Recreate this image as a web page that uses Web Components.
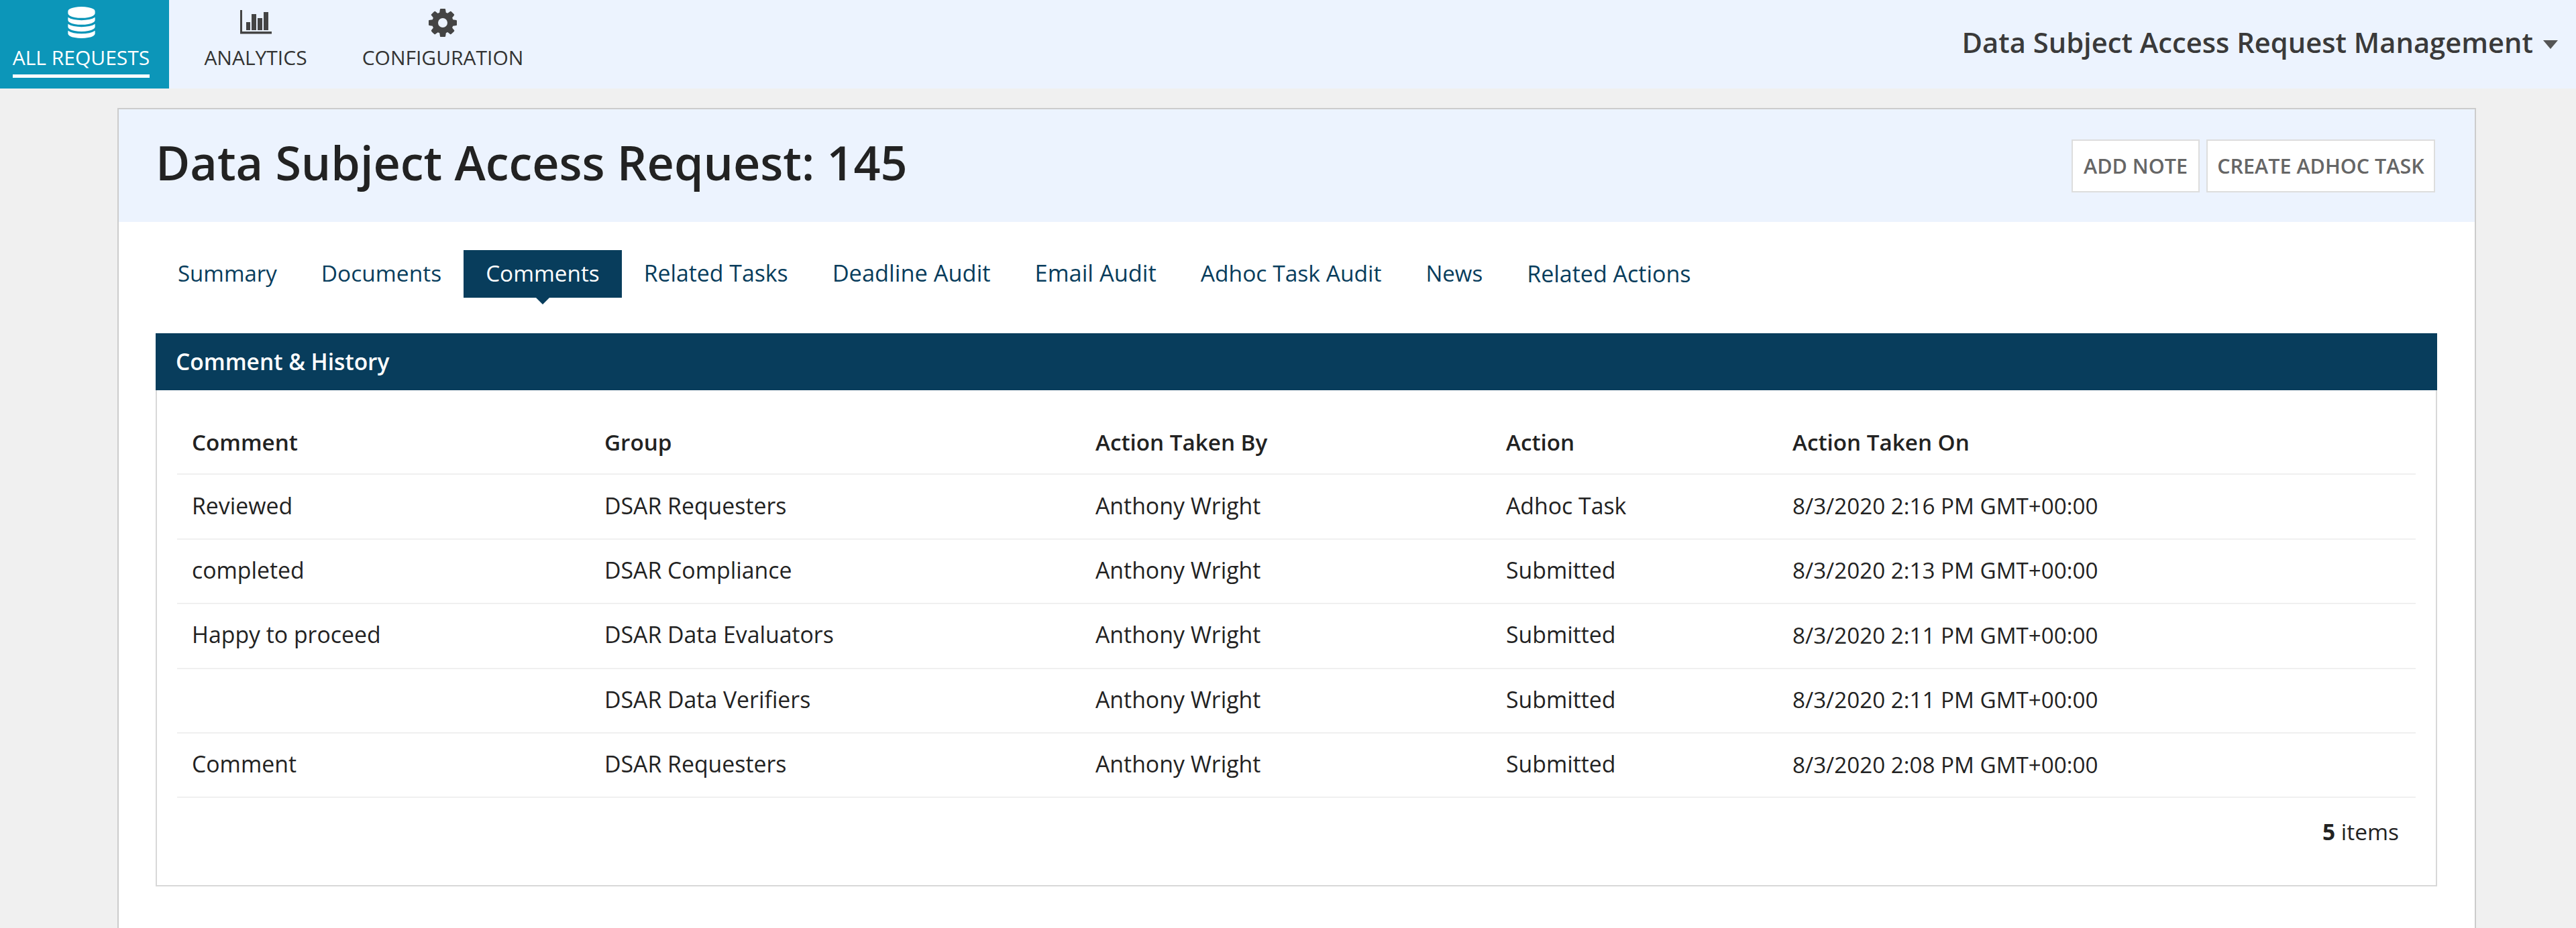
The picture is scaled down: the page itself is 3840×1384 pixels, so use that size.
<!DOCTYPE html>
<html lang="en">
<head>
<meta charset="utf-8">
<title>DSAR</title>
<style>
  html, body { margin: 0; height: 100%; }
  body { background: #f0f0f0; font-family: "Open Sans", "Liberation Sans", sans-serif; color: #222; overflow: hidden; }
</style>
</head>
<body>
<app-nav title-text="Data Subject Access Request Management">
  <nav-item active label="ALL REQUESTS" width="252">
    <svg slot="icon" width="41" height="47" viewBox="128 0 1536 1792" fill="currentColor"><path d="M896 768q237 0 443-43t325-127v170q0 69-103 128t-280 93.5-385 34.5-385-34.5-280-93.5-103-128v-170q119 84 325 127t443 43zm0 768q237 0 443-43t325-127v170q0 69-103 128t-280 93.5-385 34.5-385-34.5-280-93.5-103-128v-170q119 84 325 127t443 43zm0-384q237 0 443-43t325-127v170q0 69-103 128t-280 93.5-385 34.5-385-34.5-280-93.5-103-128v-170q119 84 325 127t443 43zm0-1152q208 0 385 34.5t280 93.5 103 128v128q0 69-103 128t-280 93.5-385 34.5-385-34.5-280-93.5-103-128v-128q0-69 103-128t280-93.5 385-34.5z"/></svg>
  </nav-item>
  <nav-item label="ANALYTICS" width="258">
    <svg slot="icon" width="47" height="37" viewBox="0 0 47 37" fill="currentColor"><path d="M0 0h3v32H47v3.5H0z"/><rect x="9" y="18" width="6" height="12"/><rect x="17" y="6" width="7" height="24"/><rect x="26" y="12" width="7" height="18"/><rect x="35" y="3" width="7" height="27"/></svg>
  </nav-item>
  <nav-item label="CONFIGURATION" width="300">
    <svg slot="icon" width="42" height="42" viewBox="128 128 1536 1536" fill="currentColor"><path d="M1152 896q0-106-75-181t-181-75-181 75-75 181 75 181 181 75 181-75 75-181zm512-109v222q0 12-8 23t-20 13l-185 28q-19 54-39 91 35 50 107 138 10 12 10 25t-9 23q-27 37-99 108t-94 71q-12 0-26-9l-138-108q-44 23-91 38-16 136-29 186-7 28-36 28h-222q-14 0-24.5-8.5t-11.5-21.5l-28-184q-49-16-90-37l-141 107q-10 9-25 9-14 0-25-11-126-114-165-168-7-10-7-23 0-12 8-23 15-21 51-66.5t54-70.5q-27-50-41-99l-183-27q-13-2-21-12.5t-8-23.5v-222q0-12 8-23t19-13l186-28q14-46 39-92-40-57-107-138-10-12-10-24 0-10 9-23 26-36 98.5-107.5t94.5-71.5q13 0 26 10l138 107q44-23 91-38 16-136 29-186 7-28 36-28h222q14 0 24.5 8.5t11.5 21.5l28 184q49 16 90 37l142-107q9-9 24-9 13 0 25 10 129 119 165 170 7 8 7 22 0 12-8 23-15 21-51 66.5t-54 70.5q26 50 41 98l183 28q13 2 21 12.5t8 23.5z"/></svg>
  </nav-item>
</app-nav>

<request-card heading="Data Subject Access Request: 145">
  <action-button slot="actions" wide="191">ADD NOTE</action-button>
  <action-button slot="actions" wide="341">CREATE ADHOC TASK</action-button>
  <tab-bar>
    <tab-item style="--fs:33px">Summary</tab-item>
    <tab-item style="--fs:33.5px">Documents</tab-item>
    <tab-item active style="--fs:33.3px">Comments</tab-item>
    <tab-item style="--fs:33.8px">Related Tasks</tab-item>
    <tab-item style="--fs:34.4px">Deadline Audit</tab-item>
    <tab-item style="--fs:34.4px">Email Audit</tab-item>
    <tab-item style="--fs:33.6px">Adhoc Task Audit</tab-item>
    <tab-item style="--fs:33px">News</tab-item>
    <tab-item style="--fs:34px">Related Actions</tab-item>
  </tab-bar>
  <history-panel heading="Comment &amp; History">
    <history-row header><span>Comment</span><span>Group</span><span>Action Taken By</span><span>Action</span><span>Action Taken On</span></history-row>
    <history-row><span>Reviewed</span><span>DSAR Requesters</span><span>Anthony Wright</span><span>Adhoc Task</span><span class="when">8/3/2020 2:16 PM GMT+00:00</span></history-row>
    <history-row><span>completed</span><span>DSAR Compliance</span><span>Anthony Wright</span><span>Submitted</span><span class="when">8/3/2020 2:13 PM GMT+00:00</span></history-row>
    <history-row><span>Happy to proceed</span><span>DSAR Data Evaluators</span><span>Anthony Wright</span><span>Submitted</span><span class="when">8/3/2020 2:11 PM GMT+00:00</span></history-row>
    <history-row><span></span><span>DSAR Data Verifiers</span><span>Anthony Wright</span><span>Submitted</span><span class="when">8/3/2020 2:11 PM GMT+00:00</span></history-row>
    <history-row><span>Comment</span><span>DSAR Requesters</span><span>Anthony Wright</span><span>Submitted</span><span class="when">8/3/2020 2:08 PM GMT+00:00</span></history-row>
    <pager-info slot="footer"><b>5</b> items</pager-info>
  </history-panel>
</request-card>

<script>
  const FONT = '"Open Sans", "Liberation Sans", sans-serif';
  function define(name, css, html, extra) {
    customElements.define(name, class extends HTMLElement {
      constructor() {
        super();
        const root = this.attachShadow({ mode: 'open' });
        root.innerHTML = '<style>' + css + '</style>' + (typeof html === 'function' ? html(this) : html);
      }
      connectedCallback() {
        const root = this.shadowRoot;
        root.querySelectorAll('[data-attr]').forEach(n => { n.textContent = this.getAttribute(n.dataset.attr) || ''; });
        if (extra) extra(this);
      }
    });
  }

  define('app-nav', `
    :host { display: flex; align-items: stretch; height: 132px; background: #ecf3fe; }
    .title { margin-left: auto; display: flex; align-items: center; gap: 15px; padding: 0 27px 6px 0; font: 600 41.7px/1 ${FONT}; color: #3a3a3a; white-space: nowrap; }
    .caret { width: 0; height: 0; border: 11px solid transparent; border-top: 13px solid #555; border-bottom: 0; margin-top: 6px; }
  `, `<slot></slot><div class="title"><span data-attr="title-text"></span><i class="caret"></i></div>`);

  define('nav-item', `
    :host { display: flex; flex-direction: column; align-items: center; box-sizing: border-box; color: #444; padding-top: 10px; }
    :host([active]) { background: #0c96b9; color: #fff; padding-right: 10px; }
    .icon { height: 47px; display: flex; align-items: center; justify-content: center; }
    .label { font: 400 30px/1 ${FONT}; white-space: nowrap; color: #333; margin-top: 14px; padding-bottom: 10px; border-bottom: 5px solid transparent; }
    :host([active]) .label { color: #fff; border-bottom-color: #fff; }
  `, `<div class="icon"><slot name="icon"></slot></div><div class="label" data-attr="label"></div>`,
  el => { el.style.width = el.getAttribute('width') + 'px'; });

  define('request-card', `
    :host { display: block; box-sizing: border-box; width: 3516px; height: 1223px; margin: 29px 0 0 175px; background: #fff; border: 2px solid #ccc; border-bottom: 0; }
    header { display: flex; align-items: center; justify-content: space-between; height: 168px; padding: 0 59px 0 55px; background: #ecf3fe; }
    h1 { margin: 0 0 10px; font: 600 70px/1 ${FONT}; color: #222; }
    .actions { display: flex; gap: 10px; }
    .body { padding: 42px 56px 0 55px; }
  `, `<header><h1 data-attr="heading"></h1><div class="actions"><slot name="actions"></slot></div></header><div class="body"><slot></slot></div>`);

  define('action-button', `
    :host { display: flex; align-items: center; justify-content: center; box-sizing: border-box; height: 79px; background: #fff; border: 2px solid #ddd; font: 600 30.5px/1 ${FONT}; color: #666; white-space: nowrap; }
  `, `<slot></slot>`, el => { el.style.width = el.getAttribute('wide') + 'px'; });

  define('tab-bar', `
    :host { display: flex; align-items: flex-start; height: 124px; }
  `, `<slot></slot>`);

  define('tab-item', `
    :host { position: relative; display: flex; align-items: center; height: 71px; padding: 0 33px 2px; box-sizing: border-box; font: 400 var(--fs, 33px)/1 ${FONT}; color: #083d5c; white-space: nowrap; }
    :host([active]) { background: #083d5c; color: #fff; }
    :host([active])::after { content: ""; position: absolute; left: 50%; top: 100%; margin-left: -10px; border: 10px solid transparent; border-top-color: #083d5c; border-bottom: 0; }
  `, `<slot></slot>`);

  define('history-panel', `
    :host { display: block; box-sizing: border-box; height: 825px; width: 3401px; background: #fff; border: 2px solid #d8d8d8; border-top: 0; }
    .bar { display: flex; align-items: center; box-sizing: border-box; height: 85px; margin: 0 -2px; padding: 0 30px; background: #083d5c; color: #fff; font: 600 33.5px/1 ${FONT}; }
    .rows { padding: 30px 30px 0 30px; }
    .foot { display: flex; justify-content: flex-end; padding: 27px 55px 0 0; }
  `, `<div class="bar" data-attr="heading"></div><div class="rows"><slot></slot></div><div class="foot"><slot name="footer"></slot></div>`);

  define('history-row', `
    :host { display: grid; grid-template-columns: 615px 732px 612px 427px 1fr; align-items: center; box-sizing: border-box; height: 96.4px; padding-bottom: 2px; border-bottom: 2px solid #f0f0f0; font: 400 33.8px/1 ${FONT}; color: #222; }
    :host([header]) { font-weight: 600; font-size: 33.2px; padding-bottom: 0; }
    ::slotted(span) { padding-left: 22px; white-space: nowrap; }
    ::slotted(.when) { font-size: 33.2px; }
  `, `<slot></slot>`);

  define('pager-info', `
    :host { display: block; font: 400 33.5px/1.4 ${FONT}; color: #222; }
    ::slotted(b) { font-weight: 700; }
  `, `<slot></slot>`);
</script>
</body>
</html>
